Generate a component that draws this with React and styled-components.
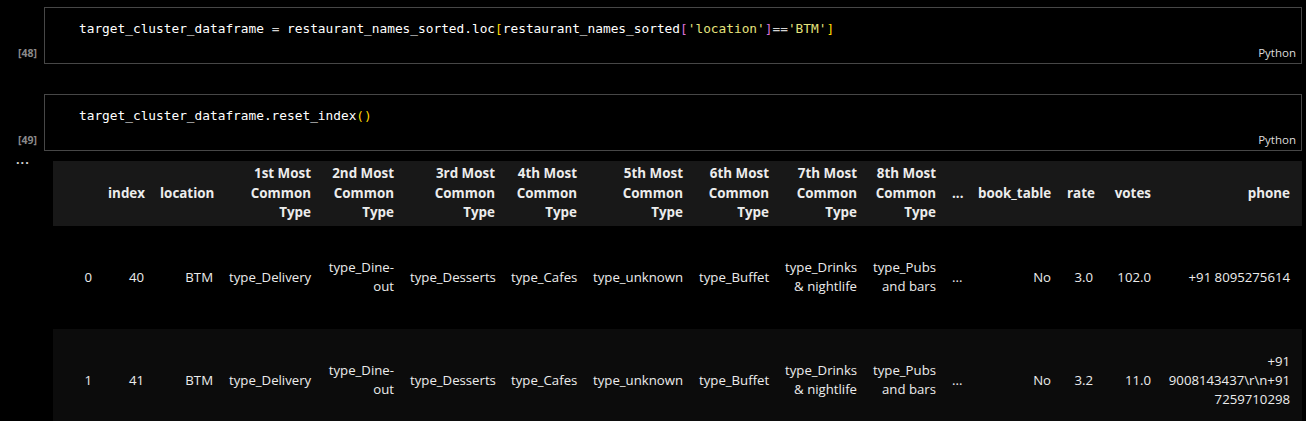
import React from "react";
import styled, { createGlobalStyle } from "styled-components";

const Global = createGlobalStyle`
  html, body { margin: 0; padding: 0; background: #000; }
  body { width: 1306px; height: 421px; overflow: hidden; }
`;

const Page = styled.div`
  display: flex;
  flex-direction: column;
  padding: 7px 4px 0 0;
  gap: 30px;
  font-family: "Open Sans", "Noto Sans", sans-serif;
  color: #e8e8e8;
`;

const Cell = styled.div`
  display: flex;
  flex-direction: column;
`;

const Row = styled.div`
  display: grid;
  grid-template-columns: 44px 1fr;
`;

const Gutter = styled.div`
  display: flex;
  flex-direction: column;
  justify-content: ${(p) => (p.$top ? "flex-start" : "flex-end")};
  align-items: ${(p) => (p.$top ? "flex-start" : "flex-end")};
  padding: ${(p) => (p.$top ? "3px 0 0 16px" : "0 7px 5px 0")};
`;

const ExecCount = styled.span`
  font-family: "Open Sans", "Noto Sans", sans-serif;
  font-weight: bold;
  font-size: 10.5px;
  line-height: 12px;
  color: #8a8a8a;
`;

const Dots = styled.span`
  font-family: "Liberation Sans", Arial, sans-serif;
  font-weight: bold;
  font-size: 13px;
  letter-spacing: 1px;
  line-height: 12px;
  color: #d0d0d0;
`;

const Editor = styled.div`
  border: 1px solid #474747;
  height: 57px;
  box-sizing: border-box;
  display: flex;
  flex-direction: column;
`;

const Code = styled.pre`
  margin: 0;
  padding: 11px 0 0 34px;
  font-family: "DejaVu Sans Mono", "Liberation Mono", monospace;
  font-size: 12.8px;
  line-height: 19px;
  color: #ffffff;
`;

const Tok = styled.span`
  color: ${(p) => p.$c};
`;

const Lang = styled.div`
  margin-top: auto;
  align-self: flex-end;
  padding: 0 5px 3px 0;
  font-size: 11.5px;
  line-height: 14px;
  color: #dcdcdc;
  font-family: "Open Sans", "Noto Sans", sans-serif;
`;

const Output = styled.div`
  padding: 10px 0 0 9px;
  overflow: hidden;
`;

const Table = styled.table`
  border-collapse: collapse;
  border-spacing: 0;
  table-layout: fixed;
  width: 1249px;
  font-size: 13.2px;
  color: #ececec;
`;

const Head = styled.thead`
  background: #181818;
`;

const Th = styled.th`
  text-align: right;
  vertical-align: middle;
  font-weight: 700;
  font-size: 13.4px;
  line-height: 19.5px;
  padding: 3px 8px;
  white-space: nowrap;
  &:last-child { padding-right: 12px; }
`;

const BodyRow = styled.tr`
  height: 103px;
  background: ${(p) => (p.$odd ? "#0c0c0c" : "#000")};
`;

const Td = styled.td`
  text-align: right;
  vertical-align: middle;
  line-height: 19px;
  padding: 0 8px;
  white-space: nowrap;
  &:last-child { padding-right: 12px; }
`;

const widths = [47, 52, 69, 98, 83, 101, 82, 106, 86, 88, 79, 26, 89, 42, 58, 143];

const headers = [
  "",
  "index",
  "location",
  ["1st Most", "Common", "Type"],
  ["2nd Most", "Common", "Type"],
  ["3rd Most", "Common", "Type"],
  ["4th Most", "Common", "Type"],
  ["5th Most", "Common", "Type"],
  ["6th Most", "Common", "Type"],
  ["7th Most", "Common", "Type"],
  ["8th Most", "Common", "Type"],
  "...",
  "book_table",
  "rate",
  "votes",
  "phone",
];

const commonCells = [
  "BTM",
  "type_Delivery",
  ["type_Dine-", "out"],
  "type_Desserts",
  "type_Cafes",
  "type_unknown",
  "type_Buffet",
  ["type_Drinks", "& nightlife"],
  ["type_Pubs", "and bars"],
  "...",
  "No",
];

const rows = [
  ["0", "40", ...commonCells, "3.0", "102.0", "+91 8095275614"],
  ["1", "41", ...commonCells, "3.2", "11.0", ["+91", "9008143437\\r\\n+91", "7259710298"]],
];

const Lines = ({ v }) =>
  Array.isArray(v)
    ? v.map((l, i) => (
        <React.Fragment key={i}>
          {i > 0 && <br />}
          {l}
        </React.Fragment>
      ))
    : v;

const C = {
  op: "#d4d4d4",
  b1: "#ffd700",
  b2: "#da70d6",
  str: "#e4e27c",
};

const CodeCell = ({ count, children }) => (
  <Cell>
    <Row>
      <Gutter>
        <ExecCount>[{count}]</ExecCount>
      </Gutter>
      <Editor>
        <Code>{children}</Code>
        <Lang>Python</Lang>
      </Editor>
    </Row>
  </Cell>
);

export default function App() {
  return (
    <>
      <Global />
      <Page>
        <CodeCell count={48}>
          target_cluster_dataframe <Tok $c={C.op}>=</Tok> restaurant_names_sorted.loc
          <Tok $c={C.b1}>[</Tok>restaurant_names_sorted<Tok $c={C.b2}>[</Tok>
          <Tok $c={C.str}>'location'</Tok>
          <Tok $c={C.b2}>]</Tok>
          <Tok $c={C.op}>==</Tok>
          <Tok $c={C.str}>'BTM'</Tok>
          <Tok $c={C.b1}>]</Tok>
        </CodeCell>
        <Cell>
          <Row>
            <Gutter>
              <ExecCount>[49]</ExecCount>
            </Gutter>
            <Editor>
              <Code>
                target_cluster_dataframe.reset_index<Tok $c={C.b1}>()</Tok>
              </Code>
              <Lang>Python</Lang>
            </Editor>
          </Row>
          <Row>
            <Gutter $top>
              <Dots>...</Dots>
            </Gutter>
            <Output>
              <Table>
                <colgroup>
                  {widths.map((w, i) => (
                    <col key={i} style={{ width: w }} />
                  ))}
                </colgroup>
                <Head>
                  <tr>
                    {headers.map((h, i) => (
                      <Th key={i}>
                        <Lines v={h} />
                      </Th>
                    ))}
                  </tr>
                </Head>
                <tbody>
                  {rows.map((r, ri) => (
                    <BodyRow key={ri} $odd={ri % 2 === 1}>
                      {r.map((c, ci) => (
                        <Td key={ci}>
                          <Lines v={c} />
                        </Td>
                      ))}
                    </BodyRow>
                  ))}
                </tbody>
              </Table>
            </Output>
          </Row>
        </Cell>
      </Page>
    </>
  );
}
